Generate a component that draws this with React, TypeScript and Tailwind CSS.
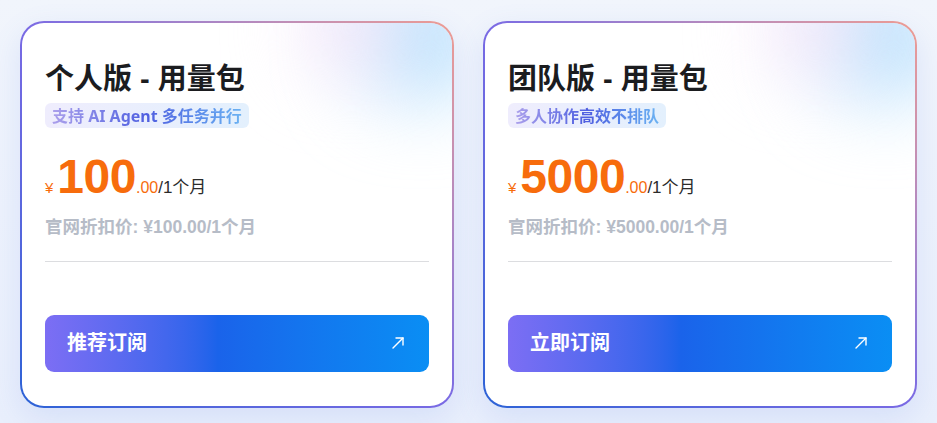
const plans = [
  {
    title: '个人版 - 用量包',
    tag: '支持 AI Agent 多任务并行',
    price: '100',
    listPrice: '¥100.00/1个月',
    cta: '推荐订阅',
  },
  {
    title: '团队版 - 用量包',
    tag: '多人协作高效不排队',
    price: '5000',
    listPrice: '¥5000.00/1个月',
    cta: '立即订阅',
  },
]

function ArrowIcon() {
  return (
    <svg width="14" height="14" viewBox="0 0 14 14" fill="none" stroke="white" strokeWidth="1.4" strokeLinecap="round" strokeLinejoin="round">
      <path d="M2 12 12 2" />
      <path d="M5 2h7v7" />
    </svg>
  )
}

function PlanCard({ plan }: { plan: (typeof plans)[number] }) {
  return (
    <div className="rounded-[24px] p-[2px] bg-gradient-to-tr from-[#2a62d6] via-[#7a6ae4] to-[#ee9c92] shadow-[0_10px_30px_rgba(90,130,230,0.14)]">
      <div className="relative overflow-hidden rounded-[22px] bg-white px-[23px] pt-[38px] pb-[34px]">
        <div className="pointer-events-none absolute -top-[45px] -right-[35px] h-[120px] w-[130px] rounded-full bg-[#b9e1fd] blur-2xl" />
        <div className="pointer-events-none absolute -top-[35px] right-[55px] h-[80px] w-[90px] rounded-full bg-[#f5e1f8] blur-2xl" />

        <div className="relative">
          <h2 className="text-[29px] leading-[36px] font-bold text-[#1b1c1f]">{plan.title}</h2>

          <div className="mt-[6px] inline-flex h-[25px] items-center rounded-[6px] bg-gradient-to-r from-[#efedfd] to-[#e3f0fd] px-[7px]">
            <span className="bg-gradient-to-r from-[#ab9feb] via-[#4f5ee0] via-50% to-[#6cb2f2] bg-clip-text font-['Noto_Sans','Noto_Sans_CJK_SC',sans-serif] text-[16px] font-bold text-transparent">
              {plan.tag}
            </span>
          </div>

          <div className="mt-[24px] flex items-baseline leading-none">
            <span className="mr-[4px] text-[15px] text-[#f76c0c]">¥</span>
            <span className="text-[48px] font-bold tracking-[-0.5px] text-[#f76c0c]">{plan.price}</span>
            <span className="text-[16px] text-[#f76c0c]">.00</span>
            <span className="text-[17px] text-[#2b2b2b]">/1个月</span>
          </div>

          <p className="mt-[14px] text-[17.5px] leading-[24px] font-bold text-[#b6bcc7]">官网折扣价: {plan.listPrice}</p>

          <div className="mt-[22px] h-px bg-[#dcdde0]" />

          <button className="mt-[53px] flex h-[57px] w-full items-center justify-between rounded-[9px] bg-gradient-to-r from-[#7c6ef4] via-[#1a63ea] via-45% to-[#0a8ef4] pl-[22px] pr-[24px] text-white">
            <span className="text-[20px] font-bold">{plan.cta}</span>
            <ArrowIcon />
          </button>
        </div>
      </div>
    </div>
  )
}

export default function App() {
  return (
    <div className="min-h-[423px] w-full bg-gradient-to-b from-[#f1f5fc] to-[#e9effc] px-[20px] pt-[21px] pb-[16px] font-['Liberation_Sans','Noto_Sans_CJK_SC',sans-serif]">
      <div className="grid grid-cols-2 gap-[29px]">
        {plans.map((p) => (
          <PlanCard key={p.title} plan={p} />
        ))}
      </div>
    </div>
  )
}
